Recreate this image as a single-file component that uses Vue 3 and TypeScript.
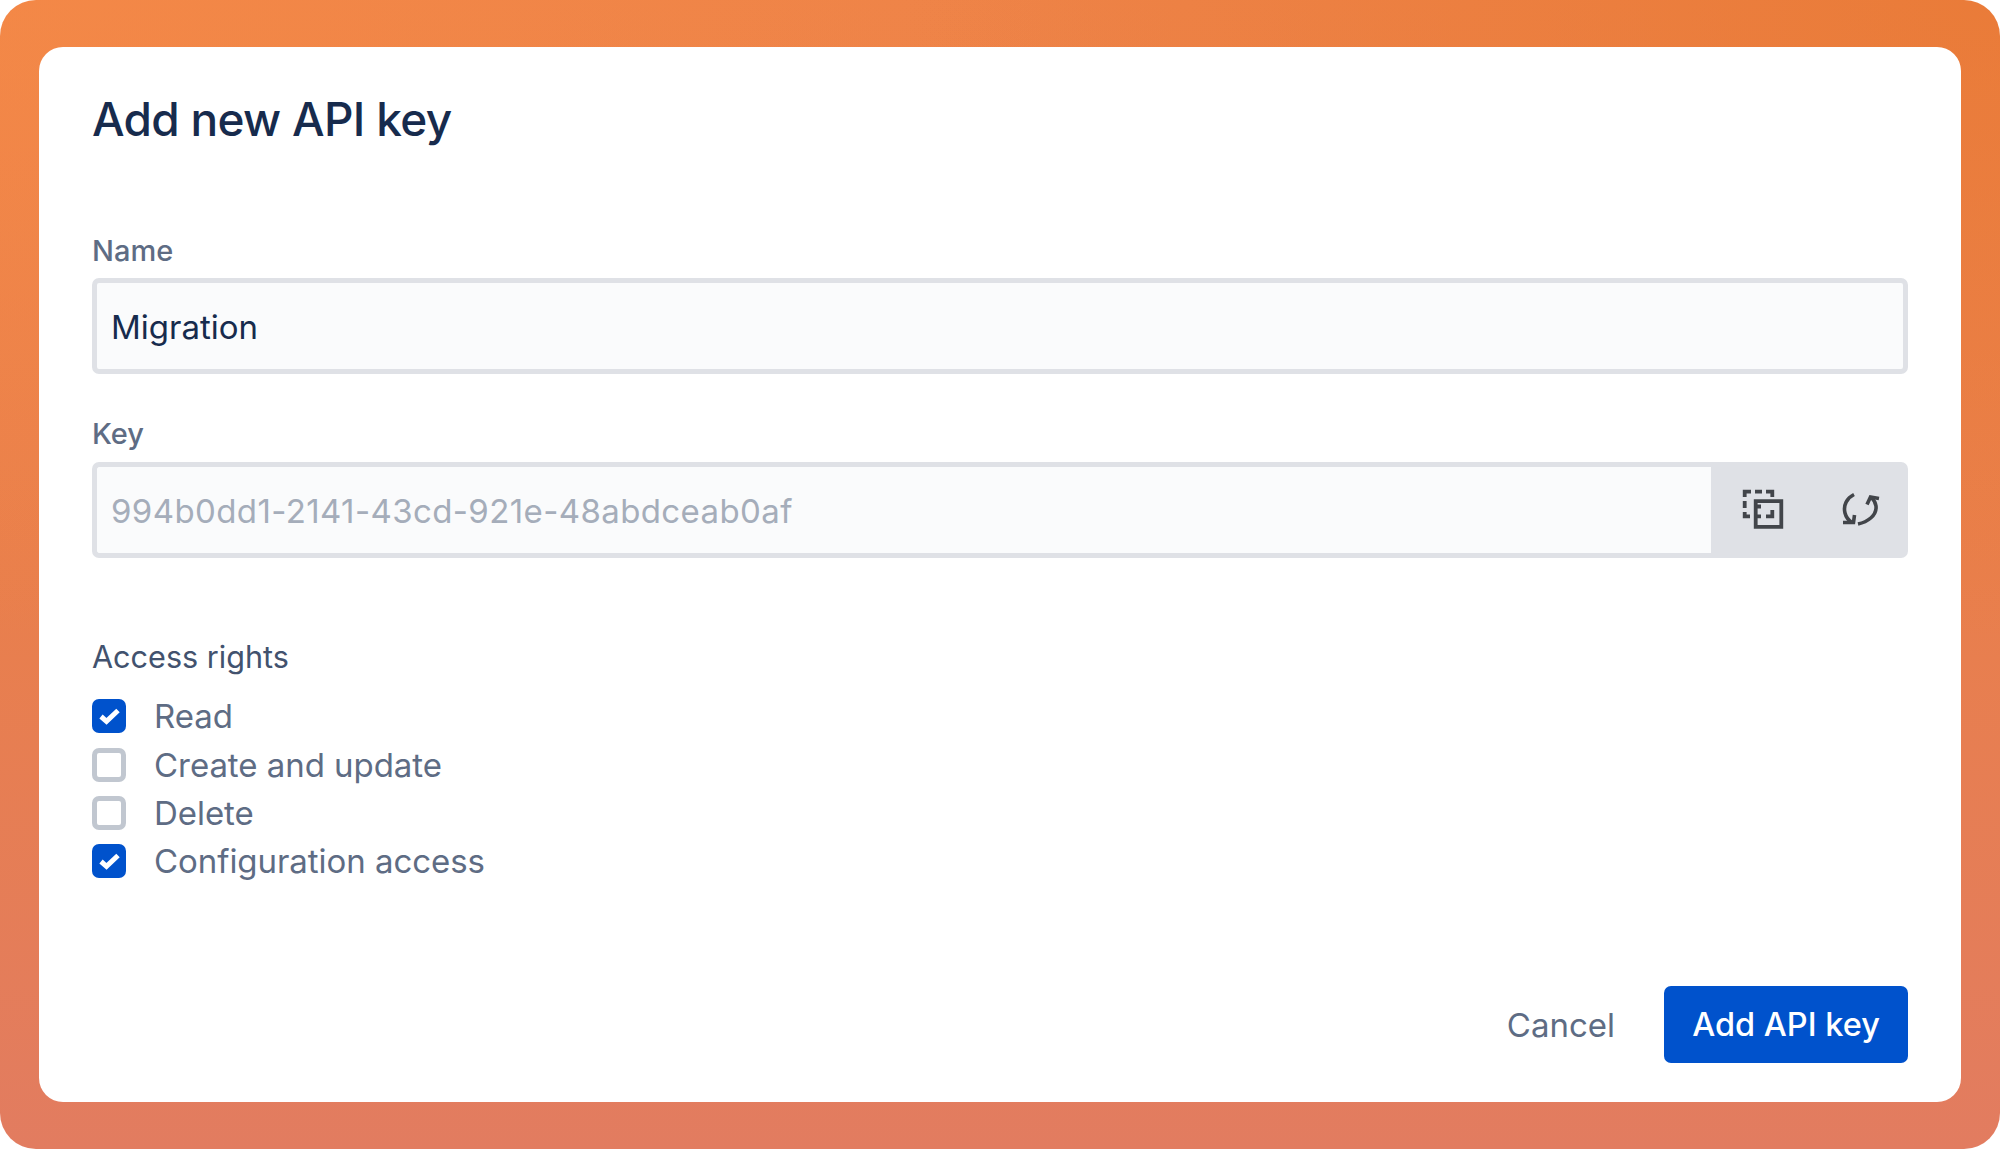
<script setup lang="ts">
const rights = [
  { label: 'Read', on: true },
  { label: 'Create and update', on: false },
  { label: 'Delete', on: false },
  { label: 'Configuration access', on: true },
]
</script>

<template>
  <div class="page">
    <div class="card">
      <h1 class="title">Add new API key</h1>
      <div class="field name-field">
        <label class="label">Name</label>
        <div class="input name-input">Migration</div>
      </div>
      <div class="field key-field">
        <label class="label">Key</label>
        <div class="key-group">
          <div class="input key-input">994b0dd1-2141-43cd-921e-48abdceab0af</div>
          <div class="key-actions">
            <svg class="icon" viewBox="0 0 42 42" fill="none" stroke="#42454a" stroke-width="3.8">
              <path d="M2.700 8V2.700H9M13 2.700h7M24 2.700h6.300V8" />
              <path d="M2.700 12v7M2.700 23v4.300H8" />
              <path d="M13.700 12.200h25.600v25.600H13.700z" />
              <path d="M30.300 21v6.300H24M15 27.300h4M15 17.500h4" />
            </svg>
            <svg class="icon" viewBox="0 0 42 42" fill="none" stroke="#42454a" stroke-width="3.6">
              <path d="M15 5.500C8 9 4 16 6 24c1 4 3 7 7 9.500" />
              <path d="M4 33.500h10.500L15.500 26" />
              <path d="M19 35c9-2 19-8 18-18-.5-3-2-6-4.500-8.500" />
              <path d="M40 9.500L31.500 8 28 15.500" />
            </svg>
          </div>
        </div>
      </div>
      <div class="rights">
        <div class="rights-title">Access rights</div>
        <div class="rights-list">
          <div v-for="r in rights" :key="r.label" class="right">
            <span class="box" :class="{ on: r.on }">
              <svg v-if="r.on" viewBox="0 0 34 34" class="check" fill="none" stroke="#fff" stroke-width="5">
                <path d="M9 17.500l5.500 4.800L26 11.500" />
              </svg>
            </span>
            <span class="right-label">{{ r.label }}</span>
          </div>
        </div>
      </div>
      <div class="footer">
        <button class="cancel">Cancel</button>
        <button class="submit">Add API key</button>
      </div>
    </div>
  </div>
</template>

<style>
html, body { margin: 0; background: #fff; }
</style>

<style scoped>
.page {
  box-sizing: border-box;
  width: 2000px;
  height: 1149px;
  padding: 47px 39px;
  border-radius: 36px;
  background:
    radial-gradient(ellipse 1100px 640px at 0 0, rgba(248, 140, 70, 0.55), transparent),
    radial-gradient(ellipse 1100px 640px at 100% 0, rgba(232, 120, 50, 0.7), transparent),
    linear-gradient(180deg, #ee8348 0%, #e97f4c 50%, #e27c60 100%);
  font-family: Inter, "Liberation Sans", sans-serif;
}
.card {
  box-sizing: border-box;
  height: 1055px;
  padding: 0 53px;
  background: #fff;
  border-radius: 24px;
  display: flex;
  flex-direction: column;
}
.title {
  margin: 44px 0 0;
  font-size: 46px;
  line-height: 56px;
  font-weight: 550;
  color: #172b4d;
  letter-spacing: -0.7px;
}
.field { display: flex; flex-direction: column; }
.name-field { margin-top: 84px; }
.key-field { margin-top: 40px; }
.label {
  font-size: 29px;
  line-height: 40px;
  font-weight: 500;
  color: #5e6c84;
  margin-bottom: 7px;
}
.input {
  box-sizing: border-box;
  height: 96px;
  display: flex;
  align-items: center;
  padding: 2px 14px 0;
  background: #fafbfc;
  border: 5px solid #dfe1e6;
  font-size: 33px;
  border-radius: 7px;
}
.name-input { color: #172b4d; }
.key-group { display: flex; margin-top: 1px; }
.key-input {
  flex: 1;
  color: #a5adba;
  border-right: none;
  border-radius: 7px 0 0 7px;
  letter-spacing: 0.39px;
}
.key-actions {
  width: 197px;
  height: 96px;
  background: #dfe1e6;
  border-radius: 0 7px 7px 0;
  display: flex;
  align-items: center;
  gap: 55px;
  padding-left: 31px;
  box-sizing: border-box;
}
.icon { width: 42px; height: 42px; flex: none; }
.rights { margin-top: 79px; }
.rights-title {
  font-size: 30.6px;
  line-height: 40px;
  color: #42526e;
}
.rights-list { display: flex; flex-direction: column; margin-top: 15px; }
.right {
  height: 48.4px;
  display: flex;
  align-items: center;
  gap: 28px;
}
.box {
  box-sizing: border-box;
  width: 34px;
  height: 34px;
  border: 5px solid #c1c7d0;
  border-radius: 7px;
  background: #fff;
  flex: none;
}
.box.on { background: #0052cc; border: none; }
.check { display: block; width: 34px; height: 34px; }
.right-label {
  font-size: 33px;
  color: #5e6c84;
  letter-spacing: -0.05px;
}
.footer {
  margin-top: auto;
  margin-bottom: 39px;
  display: flex;
  justify-content: flex-end;
  align-items: center;
  gap: 49px;
}
.cancel, .submit {
  border: none;
  font-family: inherit;
  font-size: 33px;
  padding: 0;
}
.cancel { background: none; color: #5e6c84; }
.submit {
  width: 244px;
  height: 77px;
  background: #0052cc;
  color: #fff;
  border-radius: 7px;
  font-size: 32.5px;
  font-weight: 500;
}
</style>
